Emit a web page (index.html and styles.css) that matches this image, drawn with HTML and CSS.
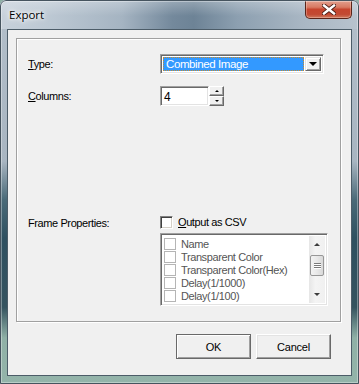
FILE: index.html
```html
<!DOCTYPE html>
<html lang="en">
<head>
    <meta charset="UTF-8">
    <title>Export</title>
    <link rel="stylesheet" href="styles.css">
</head>
<body>
    <div class="window">
        <div class="titlebar">
            <span class="title">Export</span>
            <div class="close">
                <svg width="14" height="11" viewBox="0 0 14 11">
                    <path d="M2 1.5 L12 9.5 M12 1.5 L2 9.5" stroke="#4a1c14" stroke-width="4.2" stroke-linecap="square"/>
                    <path d="M2 1.5 L12 9.5 M12 1.5 L2 9.5" stroke="#fff" stroke-width="2.4" stroke-linecap="square"/>
                </svg>
            </div>
        </div>

        <div class="client">
            <div class="group">
                <div class="row">
                    <span class="lbl"><u>T</u>ype:</span>
                    <div class="combo">
                        <div class="combo-value"><span>Combined Image</span></div>
                        <div class="combo-btn"><span class="tri down big"></span></div>
                    </div>
                </div>

                <div class="row cols">
                    <span class="lbl"><u>C</u>olumns:</span>
                    <div class="spin">
                        <div class="spin-edit">4</div>
                        <div class="spin-btns">
                            <div class="spin-btn"><span class="tri up"></span></div>
                            <div class="spin-btn"><span class="tri down"></span></div>
                        </div>
                    </div>
                </div>

                <div class="row frame">
                    <span class="lbl">Frame Properties:</span>
                    <div class="frame-ctl">
                        <div class="check"><span class="box"></span><span><u>O</u>utput as CSV</span></div>
                        <div class="listbox">
                            <div class="items">
                                <div class="item"><span class="ibox"></span>Name</div>
                                <div class="item"><span class="ibox"></span>Transparent Color</div>
                                <div class="item"><span class="ibox"></span>Transparent Color(Hex)</div>
                                <div class="item"><span class="ibox"></span>Delay(1/1000)</div>
                                <div class="item"><span class="ibox"></span>Delay(1/100)</div>
                                <div class="item"><span class="ibox"></span>Delay(1/20)</div>
                            </div>
                            <div class="vscroll">
                                <div class="sb-btn"><span class="tri up"></span></div>
                                <div class="sb-track">
                                    <div class="thumb"><i></i><i></i><i></i></div>
                                </div>
                                <div class="sb-btn"><span class="tri down"></span></div>
                            </div>
                        </div>
                    </div>
                </div>
            </div>

            <div class="buttons">
                <button class="btn default">OK</button>
                <button class="btn">Cancel</button>
            </div>
        </div>
    </div>
</body>
</html>
```

FILE: styles.css
```css
*{margin:0; padding:0; box-sizing:border-box;}
body{width:359px; height:384px; overflow:hidden; font-family:"Liberation Sans", Arial, sans-serif; font-size:11px; letter-spacing:-0.4px; color:#000; background:#8fb0a6;}
u{text-decoration:underline; text-underline-offset:1px;}

/* window frame */
.window{position:relative; width:359px; height:384px; display:flex; flex-direction:column; border-radius:6px 6px 0 0; overflow:hidden;
    background:linear-gradient(to bottom, #b3bfca 0, #a8b5c1 42%, #4a6a78 52%, #2f5060 62%, #35535f 80%, #8fb0a6 88%, #94b4aa 100%);}
.window::after{content:""; position:absolute; inset:0; border:1px solid #46545f; border-radius:6px 6px 0 0; box-shadow:inset 0 0 0 1px rgba(255,255,255,.35); pointer-events:none;}

.titlebar{height:29px; flex:none; display:flex; align-items:flex-start; padding:0 7px 0 9px;
    background:linear-gradient(rgba(255,255,255,.28), rgba(255,255,255,0) 55%),
               linear-gradient(to right, #c7d1db 0, #bcc8d3 14%, #a5b4c2 34%, #74899c 48%, #6d8396 54%, #8c9fb0 66%, #a8b6c3 84%, #b8c3ce 100%);}
.title{line-height:30px; font-family:"Open Sans", "Liberation Sans", sans-serif; font-size:11.5px; letter-spacing:0; color:#000; text-shadow:0 0 5px #fff, 0 0 8px #fff, 0 0 3px rgba(255,255,255,.8);}
.close{margin-left:auto; width:47px; height:19px; display:flex; align-items:center; justify-content:center; border:1px solid #5a2419; border-top:none; border-radius:0 0 5px 5px;
    background:linear-gradient(#e3a493 0, #d87a63 40%, #c6452e 52%, #c24a33 80%, #cf7a5f 100%); box-shadow:inset 0 0 0 1px rgba(255,220,210,.35);}

/* client area */
.client{flex:1; margin:0 7px 8px; background:#f0f0f0; border:1px solid #4c5c68; display:flex; flex-direction:column;}
.group{margin:8px 10px 0 8px; height:284px; flex:none; border:1px solid #a0a0a0; box-shadow:inset 1px 1px 0 #fff, 1px 1px 0 #fff; display:flex; flex-direction:column; padding:15px 0 0 11px;}
.row{display:flex; align-items:center;}
.lbl{width:132px; flex:none;}
.cols{margin-top:12px;}
.frame{margin-top:110px; align-items:flex-start;}
.frame .lbl{line-height:13px; padding-top:1px;}

/* combo */
.combo{width:164px; height:20px; display:flex; padding:2px; background:#fff; border:1px solid; border-color:#a0a0a0 #fff #fff #a0a0a0; box-shadow:inset 1px 1px 0 #696969, inset -1px -1px 0 #e3e3e3;}
.combo-value{flex:1; background:#3399ff; border:1px dotted #c98a2a; color:#fff; display:flex; align-items:center; padding-left:2px; margin-right:1px; font-size:11.5px;}
.combo-btn{width:16px; display:flex; align-items:center; justify-content:center; background:#f0f0f0; border:1px solid; border-color:#e3e3e3 #696969 #696969 #e3e3e3; box-shadow:inset 1px 1px 0 #fff, inset -1px -1px 0 #a0a0a0;}

.tri{width:0; height:0; border-left:3px solid transparent; border-right:3px solid transparent;}
.tri.down{border-top:3px solid #000;}
.tri.up{border-bottom:3px solid #000;}
.tri.big{border-left-width:4px; border-right-width:4px; border-top-width:4px;}

/* spin edit */
.spin{display:flex; height:20px;}
.spin-edit{width:49px; height:20px; background:#fff; padding:3px 0 0 3px; border:1px solid; border-color:#a0a0a0 #fff #fff #a0a0a0; box-shadow:inset 1px 1px 0 #696969, inset -1px -1px 0 #e3e3e3; font-size:12px;}
.spin-btns{width:15px; display:flex; flex-direction:column;}
.spin-btn{flex:1; display:flex; align-items:center; justify-content:center; background:#f0f0f0; border:1px solid; border-color:#fff #696969 #696969 #fff; box-shadow:inset -1px -1px 0 #a0a0a0;}
.spin-btn .tri{border-left-width:2px; border-right-width:2px;}
.spin-btn .tri.up{border-bottom-width:2px;}
.spin-btn .tri.down{border-top-width:2px;}

/* checkbox + list */
.frame-ctl{display:flex; flex-direction:column; gap:4px;}
.check{display:flex; align-items:center; gap:5px; height:13px; line-height:13px;}
.box{width:13px; height:13px; background:#fff; border:1px solid; border-color:#808080 #fff #fff #808080; box-shadow:inset 1px 1px 0 #404040, inset -1px -1px 0 #d4d0c8;}
.listbox{width:168px; height:73px; display:flex; padding:2px; background:#fff; border:1px solid; border-color:#a0a0a0 #fff #fff #a0a0a0; box-shadow:inset 1px 1px 0 #696969, inset -1px -1px 0 #e3e3e3; overflow:hidden;}
.items{flex:1; overflow:hidden; padding-top:1px;}
.item{height:13px; display:flex; align-items:center; gap:5px; padding-left:1px; color:#555; white-space:nowrap;}
.ibox{width:12px; height:12px; flex:none; border:1px solid #b5b5b5; background:#fff;}
.vscroll{width:16px; display:flex; flex-direction:column; background:linear-gradient(to right, #e6e6e6, #f4f4f4 40%, #f0f0f0);}
.sb-btn{height:17px; display:flex; align-items:center; justify-content:center;}
.sb-btn .tri{border-left-width:3px; border-right-width:3px; opacity:.75;}
.sb-track{flex:1; padding:2px 1px 0;}
.thumb{height:21px; border:1px solid #979797; border-radius:2px; background:linear-gradient(to right, #f3f3f3, #e8e8e8 50%, #d9d9d9); display:flex; flex-direction:column; align-items:center; justify-content:center; gap:1px;}
.thumb i{display:block; width:7px; height:1px; background:#7a7a7a; box-shadow:0 1px 0 #fff;}

/* buttons */
.buttons{display:flex; justify-content:flex-end; gap:5px; margin-top:12px; padding-right:20px;}
.btn{width:75px; height:25px; font-family:"Liberation Sans", Arial, sans-serif; font-size:11px; letter-spacing:-0.2px; color:#000; background:#f0f0f0; border:1px solid; border-color:#fff #696969 #696969 #fff; box-shadow:inset -1px -1px 0 #a0a0a0, inset 1px 1px 0 #e3e3e3;}
.btn.default{border-color:#696969; box-shadow:inset 1px 1px 0 #fff, inset -1px -1px 0 #a0a0a0;}
```
